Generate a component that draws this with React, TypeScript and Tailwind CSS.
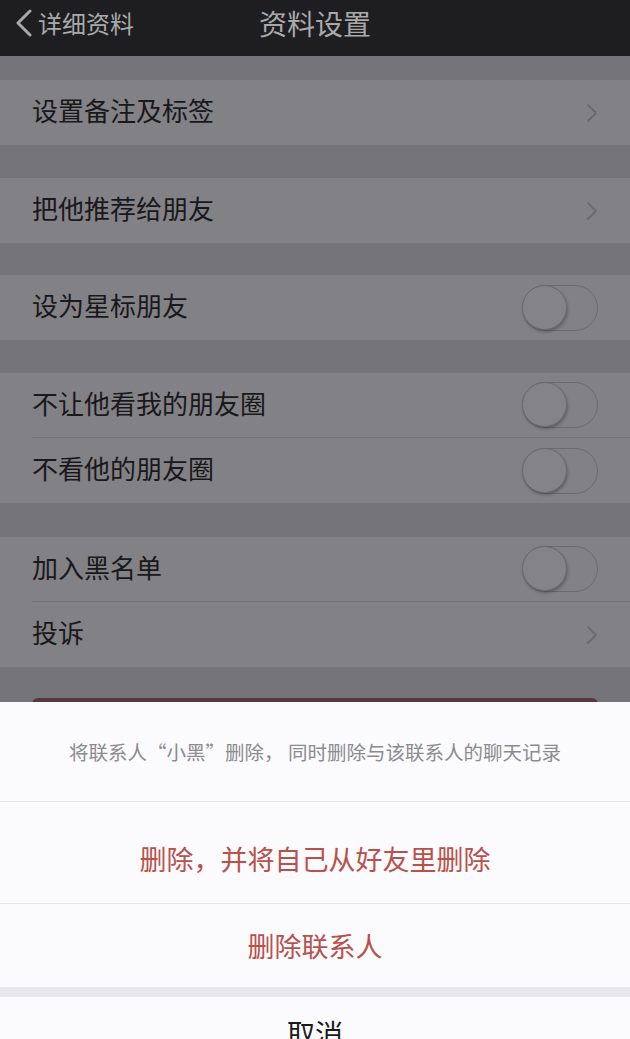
import { ReactNode } from "react";

const font = { fontFamily: '"Noto Sans CJK SC", "Noto Sans", sans-serif' };

function Chevron() {
	return (
		<svg width="12" height="20" viewBox="0 0 12 20" className="shrink-0">
			<path d="M2 2 L10 10 L2 18" fill="none" stroke="#6c6b70" strokeWidth="2" strokeLinecap="round" strokeLinejoin="round" />
		</svg>
	);
}

function Toggle() {
	return (
		<div className="relative h-[46px] w-[76px] shrink-0 rounded-full border-[1.5px] border-[#6b6a6f] bg-[#828185]">
			<div className="absolute left-[-1px] top-[-1px] h-[45px] w-[45px] rounded-full border-[1.5px] border-[#6b6a6f] bg-[#848387] shadow-[1px_2px_3px_rgba(0,0,0,0.25)]" />
		</div>
	);
}

function Row({ label, right, divider }: { label: string; right: ReactNode; divider?: boolean }) {
	return (
		<div className="flex h-[65px] bg-[#828185] pl-[32px]">
			<div className={`flex flex-1 items-center justify-between pr-[32px] ${divider ? "border-b border-[#747377]" : ""}`}>
				<span className="pb-[5px] text-[26px] leading-none text-[#19181b]">{label}</span>
				{right}
			</div>
		</div>
	);
}

export default function App() {
	return (
		<div style={font} className="relative h-[1039px] w-[630px] overflow-hidden bg-[#757478]">
			{/* nav bar */}
			<div className="relative flex h-[56px] items-center bg-[#1e1d20] pb-[10px]">
				<div className="flex items-center pl-[15px]">
					<svg width="18" height="28" viewBox="0 0 18 28">
						<path d="M15 2 L3 14 L15 26" fill="none" stroke="#a9a9ab" strokeWidth="3" strokeLinecap="round" strokeLinejoin="round" />
					</svg>
					<span className="ml-[5px] text-[24px] leading-none text-[#a9a9ab]">详细资料</span>
				</div>
				<div className="absolute inset-x-0 top-0 flex h-[46px] items-center justify-center pointer-events-none">
					<span className="text-[28px] leading-none text-[#a9a9ab]">资料设置</span>
				</div>
			</div>

			<div className="mt-[24px]">
				<Row label="设置备注及标签" right={<Chevron />} />
			</div>
			<div className="mt-[33px]">
				<Row label="把他推荐给朋友" right={<Chevron />} />
			</div>
			<div className="mt-[32px]">
				<Row label="设为星标朋友" right={<Toggle />} />
			</div>
			<div className="mt-[33px]">
				<Row label="不让他看我的朋友圈" right={<Toggle />} divider />
				<Row label="不看他的朋友圈" right={<Toggle />} />
			</div>
			<div className="mt-[34px]">
				<Row label="加入黑名单" right={<Toggle />} divider />
				<Row label="投诉" right={<Chevron />} />
			</div>
			{/* delete button, mostly hidden by the sheet */}
			<div className="mx-[32px] mt-[31px] h-[60px] rounded-[6px] bg-[#533a3d]" />

			{/* action sheet */}
			<div className="absolute inset-x-0 bottom-0 top-[702px] flex flex-col bg-[#fbfafd]">
				<div className="flex h-[100px] shrink-0 items-center justify-center border-b border-[#e6e5ea]">
					<span className="text-[19.5px] leading-none text-[#8c8b90]">将联系人“小黑”删除， 同时删除与该联系人的聊天记录</span>
				</div>
				<div className="flex h-[102px] shrink-0 items-center justify-center border-b border-[#e6e5ea] pt-[12px]">
					<span className="text-[27px] leading-none text-[#b8514b]">删除，并将自己从好友里删除</span>
				</div>
				<div className="flex h-[83px] shrink-0 items-center justify-center">
					<span className="text-[27px] leading-none text-[#b8514b]">删除联系人</span>
				</div>
				<div className="h-[10px] shrink-0 bg-[#e8e7ec]" />
				<div className="flex shrink-0 justify-center pt-[22px]">
					<span className="text-[28px] leading-none text-[#1a1a1c]">取消</span>
				</div>
			</div>
		</div>
	);
}
